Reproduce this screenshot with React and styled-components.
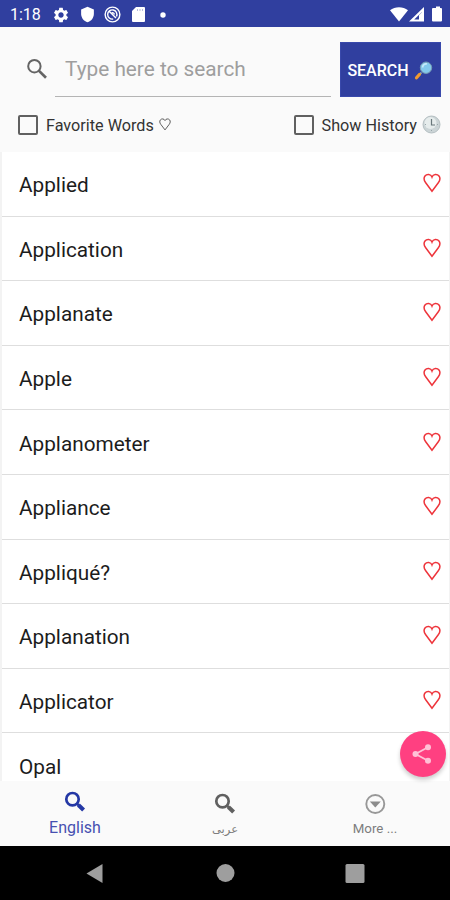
import React from 'react';
import styled, { createGlobalStyle } from 'styled-components';
import { MdSettings, MdShield } from 'react-icons/md';

const GlobalStyle = createGlobalStyle`
  * { box-sizing: border-box; }
  body { margin: 0; background: #fafafa; font-family: Roboto, "Noto Sans", sans-serif; }
`;

const Screen = styled.div`
  width: 450px;
  height: 900px;
  display: flex;
  flex-direction: column;
  overflow: hidden;
  background: #fafafa;
`;

const StatusBar = styled.header`
  height: 27px;
  flex: none;
  display: flex;
  align-items: center;
  padding: 2px 8px 0 10px;
  background: #303f9f;
  color: #fff;
`;

const Clock = styled.span`
  width: 42px;
  font-size: 16px;
  line-height: 24px;
  padding-top: 1px;
`;

const StatusIcon = styled.span`
  display: flex;
  width: ${(p) => p.$slot}px;
`;

const Spacer = styled.div`
  flex: 1;
`;

const SearchArea = styled.section`
  height: 125px;
  flex: none;
  display: flex;
  flex-direction: column;
`;

const SearchRow = styled.div`
  display: flex;
  height: 70px;
  padding: 15px 9px 0 26px;
`;

const SearchIconBox = styled.div`
  width: 29px;
  padding-top: 16px;
`;

const Field = styled.div`
  width: 276px;
  height: 55px;
  padding-left: 10px;
  border-bottom: 1px solid #b4b4b4;
  color: #9e9e9e;
  font-size: 20.8px;
  line-height: 55px;
  white-space: nowrap;
`;

const SearchButton = styled.button`
  display: flex;
  align-items: center;
  justify-content: center;
  gap: 5px;
  width: 101px;
  height: 55px;
  margin-left: 9px;
  padding: 1px 0 0;
  border: 1px solid #3949ab;
  background: #303f9f;
  color: #fff;
  font: 500 16px Roboto, sans-serif;
`;

const Options = styled.div`
  display: flex;
  justify-content: space-between;
  padding: 17px 9px 0 18px;
`;

const Option = styled.label`
  display: flex;
  align-items: center;
  height: 21px;
  color: #333;
  font-size: 16.2px;
  white-space: nowrap;
`;

const CheckBox = styled.span`
  width: 20px;
  height: 20px;
  margin-right: 8px;
  border: 2px solid #606060;
  border-radius: 2px;
`;

const OptionGlyph = styled.span`
  display: flex;
  margin-left: 5px;
`;

const OptionText = styled.span`
  padding-top: 1px;
`;

const List = styled.main`
  height: 629px;
  flex: none;
  overflow: hidden;
  border-left: 2px solid #f3f3f3;
  border-right: 1px solid #f3f3f3;
  background: #fff;
`;

const WordRow = styled.div`
  display: flex;
  align-items: center;
  justify-content: space-between;
  height: 64.6px;
  padding: 3px 8px 0 17px;
  border-bottom: 1px solid #dedede;
  color: #1c1c1c;
  font-size: 20.75px;
`;

const HeartBox = styled.span`
  display: flex;
  margin-bottom: 4px;
`;

const BottomNav = styled.nav`
  display: grid;
  grid-template-columns: repeat(3, 1fr);
  height: 65px;
  flex: none;
  background: #fafafa;
`;

const Tab = styled.div`
  display: flex;
  flex-direction: column;
  align-items: center;
  padding-top: ${(p) => (p.$active ? 10 : 12)}px;
  color: ${(p) => (p.$active ? '#2438a5' : '#606060')};
`;

const TabLabel = styled.span`
  margin-top: ${(p) => (p.$active ? 7 : 6)}px;
  color: ${(p) => (p.$active ? '#4650b0' : '#7d7d7d')};
  font-size: ${(p) => (p.$active ? 16 : 13.3)}px;
  line-height: 16px;
`;

const ArabicLabel = styled(TabLabel)`
  font-family: "DejaVu Sans", sans-serif;
  font-size: 11.5px;
`;

const SystemNav = styled.footer`
  height: 54px;
  flex: none;
  background: #000;
`;

const ShareButton = styled.button`
  position: absolute;
  left: 400px;
  top: 731px;
  display: flex;
  align-items: center;
  justify-content: center;
  width: 46px;
  height: 46px;
  padding: 0 2px 0 0;
  border: 0;
  border-radius: 50%;
  background: #ff4081;
  box-shadow: 0 3px 4px rgba(0, 0, 0, 0.2);
`;

const words = [
  'Applied', 'Application', 'Applanate', 'Apple', 'Applanometer',
  'Appliance', 'Appliqué?', 'Applanation', 'Applicator', 'Opal',
];

const Heart = ({ width, height, color, stroke = 1.5 }) => (
  <svg width={width} height={height} viewBox="0 0 18 20" preserveAspectRatio="none" fill="none">
    <path d="M9 18.3L2.7 9.8C.9 7.4 .7 4.8 2 3C3.7 .7 7.8 .8 9 4C10.2 .8 14.3 .7 16 3C17.3 4.8 17.1 7.4 15.3 9.8Z" stroke={color} strokeWidth={stroke} />
  </svg>
);

const Target = () => (
  <svg width="17" height="17" viewBox="0 0 18 18" fill="none" stroke="#fff" strokeWidth="1.5">
    <circle cx="9" cy="9" r="7.8" />
    <path d="M13.2 11.1A4.9 4.9 0 1 0 9.7 13.8M5.5 5.5L12.7 12.7M11 9A2 2 0 0 0 8.3 7.2" />
  </svg>
);

const SdCard = () => (
  <svg width="13" height="15" viewBox="0 0 13 15">
    <path fill="#fff" d="M4 0H12Q13 0 13 1V14Q13 15 12 15H1Q0 15 0 14V4Z" />
    <path stroke="#303f9f" strokeOpacity=".35" d="M5.5 2V4M8 2V4M10.5 2V4" />
  </svg>
);

const Signals = () => (
  <svg width="52" height="17" viewBox="0 0 52 17" fill="#fff">
    <path d="M0 4.3C5 .1 13 .1 18 4.3L9 15.5Z" />
    <path fillRule="evenodd" d="M34 1V15.5H19ZM32 6L24.2 13.6H29V9.3L32 6.3Z" />
    <path d="M44 2H46V.5H50V2H51Q52 2 52 3V14.5Q52 15.5 51 15.5H43Q42 15.5 42 14.5V3Q42 2 43 2Z" />
  </svg>
);

const Lens = () => (
  <svg width="20" height="21" viewBox="1 0 20 21">
    <path d="M8.5 12.5L6.2 14.8" stroke="#8ba4b5" strokeWidth="1.8" />
    <path d="M6.4 14.5L3.5 17.7" stroke="#f39a2d" strokeWidth="3.2" strokeLinecap="round" />
    <circle cx="13" cy="7.7" r="5.7" fill="#83c9ed" stroke="#769bb2" />
    <path d="M9.7 7.5A3.4 3.4 0 0 1 14 4" fill="none" stroke="#c5eafa" strokeWidth="1.7" />
  </svg>
);

const ClockFace = () => (
  <svg width="19" height="19" viewBox="0 0 19 19" fill="none">
    <circle cx="9.5" cy="9.5" r="8.5" fill="#cbd4d6" stroke="#b5bfc2" />
    <circle cx="8.5" cy="8" r="6" fill="#e6ecec" />
    <path d="M9.5 4V10H13" stroke="#69777b" strokeWidth="1.2" />
    <path d="M9.5 15V16M3 9.5H4M15 9.5H16" stroke="#98a6aa" />
  </svg>
);

const TabSearch = () => (
  <svg width="22" height="22" viewBox="0 0 22 22" fill="none" stroke="currentColor">
    <circle cx="8.5" cy="8.2" r="6.2" strokeWidth="2.7" />
    <path d="M12.7 12.5L14.7 14.2" strokeWidth="2.6" />
    <path d="M14.4 14L19.6 19" strokeWidth="4.1" />
  </svg>
);

export default function App() {
  return (
    <Screen>
      <GlobalStyle />
      <StatusBar>
        <Clock>1:18</Clock>
        <StatusIcon $slot={27}><MdSettings size={18} /></StatusIcon>
        <StatusIcon $slot={25}><MdShield size={17} /></StatusIcon>
        <StatusIcon $slot={28}><Target /></StatusIcon>
        <StatusIcon $slot={28}><SdCard /></StatusIcon>
        <svg width="6" height="6"><circle cx="3" cy="3" r="2.7" fill="#fff" /></svg>
        <Spacer />
        <Signals />
      </StatusBar>

      <SearchArea>
        <SearchRow>
          <SearchIconBox>
            <svg width="22" height="22" viewBox="0 0 22 22" fill="none" stroke="#646464">
              <circle cx="8.4" cy="8.2" r="6.2" strokeWidth="2" />
              <path d="M12.8 12.6L20 19.8" strokeWidth="2.7" />
            </svg>
          </SearchIconBox>
          <Field>Type here to search</Field>
          <SearchButton>SEARCH <Lens /></SearchButton>
        </SearchRow>
        <Options>
          <Option><CheckBox /><OptionText>Favorite Words</OptionText><OptionGlyph><Heart width={12} height={13} color="#444" stroke={1.3} /></OptionGlyph></Option>
          <Option><CheckBox /><OptionText>Show History</OptionText><OptionGlyph><ClockFace /></OptionGlyph></Option>
        </Options>
      </SearchArea>

      <List>
        {words.map((word) => (
          <WordRow key={word}>
            {word}
            <HeartBox><Heart width={18} height={20} color="#ee343b" /></HeartBox>
          </WordRow>
        ))}
      </List>

      <BottomNav>
        <Tab $active><TabSearch /><TabLabel $active>English</TabLabel></Tab>
        <Tab><TabSearch /><ArabicLabel lang="ar">عربى</ArabicLabel></Tab>
        <Tab>
          <svg width="22" height="22" viewBox="0 0 22 22">
            <circle cx="11.3" cy="11" r="9" fill="none" stroke="#989898" strokeWidth="1.9" />
            <path d="M5.8 8.5H16.8L11.3 14.5Z" fill="#8c8c8c" />
          </svg>
          <TabLabel>More ...</TabLabel>
        </Tab>
      </BottomNav>

      <SystemNav>
        <svg width="450" height="54" viewBox="0 0 450 54" fill="#9e9e9e">
          <path d="M86.5 27.5L102.5 18V37Z" />
          <circle cx="225.5" cy="27" r="9" />
          <rect x="345.5" y="18" width="19" height="19" rx="1.5" />
        </svg>
      </SystemNav>

      <ShareButton aria-label="Share">
        <svg width="22" height="22" viewBox="0 0 22 22" fill="#ffc1d6">
          <path d="M17 4.3L4.5 11L17 17.7" fill="none" stroke="#ffc1d6" strokeWidth="1.8" />
          <circle cx="17" cy="4.3" r="3" />
          <circle cx="4.5" cy="11" r="3" />
          <circle cx="17" cy="17.7" r="3" />
        </svg>
      </ShareButton>
    </Screen>
  );
}
